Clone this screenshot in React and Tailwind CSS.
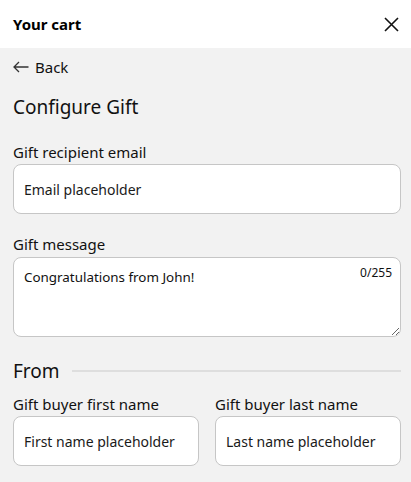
import React from "react";

const font = { fontFamily: '"Noto Sans", "Open Sans", sans-serif' };

function Field({ label, placeholder, className = "" }) {
  return (
    <div className={"flex flex-col " + className}>
      <label className="h-5 text-[15px] leading-5 text-[#111]">{label}</label>
      <input
        className="mt-[2px] h-[50px] w-full rounded-lg border border-[#c6c6c6] bg-white px-[10px] text-[14px] text-[#111] placeholder:text-[#1a1a1a] outline-none"
        placeholder={placeholder}
      />
    </div>
  );
}

export default function App() {
  return (
    <div className="min-h-[482px] w-[411px] bg-[#f2f2f2]" style={font}>
      <header className="flex h-12 items-center justify-between bg-white pl-[13px] pr-[10px]">
        <h1 className="text-[15px] font-bold text-black">Your cart</h1>
        <button className="flex h-[20px] w-[20px] items-center justify-center">
          <svg width="15" height="15" viewBox="0 0 15 15" fill="none" stroke="#111" strokeWidth="1.6">
            <path d="M1 1 L14 14 M14 1 L1 14" />
          </svg>
        </button>
      </header>
      <main className="flex flex-col pl-[13px] pr-[10px] pt-[9px]">
        <button className="flex h-5 items-center gap-[6px] text-[15px] text-[#111]">
          <svg width="16" height="12" viewBox="0 0 16 12" fill="none" stroke="#333" strokeWidth="1.3">
            <path d="M15.5 6 H1.2 M6 1 L1 6 L6 11" />
          </svg>
          Back
        </button>
        <h2 className="mt-4 h-7 text-[19px] leading-7 text-[#111]">Configure Gift</h2>
        <Field className="mt-[21px]" label="Gift recipient email" placeholder="Email placeholder" />
        <div className="mt-5 flex flex-col">
          <label className="h-5 text-[15px] leading-5 text-[#111]">Gift message</label>
          <div className="relative mt-[3px]">
            <textarea
              className="block h-[80px] w-full rounded-lg border border-[#c6c6c6] bg-white px-[10px] pt-[9px] text-[13.4px] text-[#111] outline-none"
              defaultValue="Congratulations from John!"
            />
            <span className="absolute right-[9px] top-[7px] text-[12px] text-[#111]">0/255</span>
          </div>
        </div>
        <div className="mt-[22px] flex h-6 items-center gap-3">
          <span className="text-[19px] leading-6 text-[#111]">From</span>
          <div className="h-[2px] flex-1 bg-[#dedede]" />
        </div>
        <div className="mt-[11px] grid grid-cols-2 gap-4 pb-4">
          <Field label="Gift buyer first name" placeholder="First name placeholder" />
          <Field label="Gift buyer last name" placeholder="Last name placeholder" />
        </div>
      </main>
    </div>
  );
}
